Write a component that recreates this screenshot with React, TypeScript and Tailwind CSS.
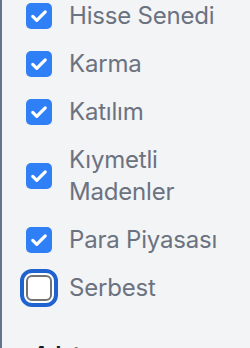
import { useState } from "react";

const TYPES = [
  { label: "Hisse Senedi", checked: true },
  { label: "Karma", checked: true },
  { label: "Katılım", checked: true },
  { label: "Kıymetli Madenler", checked: true },
  { label: "Para Piyasası", checked: true },
  { label: "Serbest", checked: false },
];

function Box({ checked, focused }: { checked: boolean; focused?: boolean }) {
  if (checked) {
    return (
      <span className="flex h-[26px] w-[26px] shrink-0 items-center justify-center rounded-[5px] bg-[#2f7ff7]">
        <svg viewBox="0 0 24 24" className="h-[20px] w-[20px]" fill="none">
          <path
            d="M4.5 12.5l4.8 4.8L19.5 7"
            stroke="white"
            strokeWidth="3.8"
            strokeLinecap="round"
            strokeLinejoin="round"
          />
        </svg>
      </span>
    );
  }
  return (
    <span
      className={`flex h-[26px] w-[26px] shrink-0 rounded-[6px] border-2 border-[#737373] bg-white ${
        focused ? "outline-4 outline-offset-[2px] outline-[#1f63d0] shadow-[0_0_0_6px_white]" : ""
      }`}
    />
  );
}

export default function App() {
  const [items, setItems] = useState(TYPES);

  return (
    <div
      className="h-[348px] w-[250px] overflow-hidden border-l-2 border-[#64748b] bg-[#f3f4f6]"
      style={{ fontFamily: "Inter, 'Noto Sans', sans-serif" }}
    >
      <ul className="flex flex-col gap-4 pb-9 pl-6">
        {items.map((it, i) => (
          <li key={it.label}>
            <label
              className="flex cursor-pointer items-center gap-[17px]"
              onClick={() =>
                setItems((prev) =>
                  prev.map((p, j) => (j === i ? { ...p, checked: !p.checked } : p))
                )
              }
            >
              <Box checked={it.checked} focused={it.label === "Serbest"} />
              <span className="flex-1 text-2xl leading-8 tracking-[-0.2px] text-[#6b7280]">
                {it.label}
              </span>
            </label>
          </li>
        ))}
      </ul>
      <h3 className="pl-8 text-xl font-bold leading-7 text-[#111827]">Adet</h3>
    </div>
  );
}
